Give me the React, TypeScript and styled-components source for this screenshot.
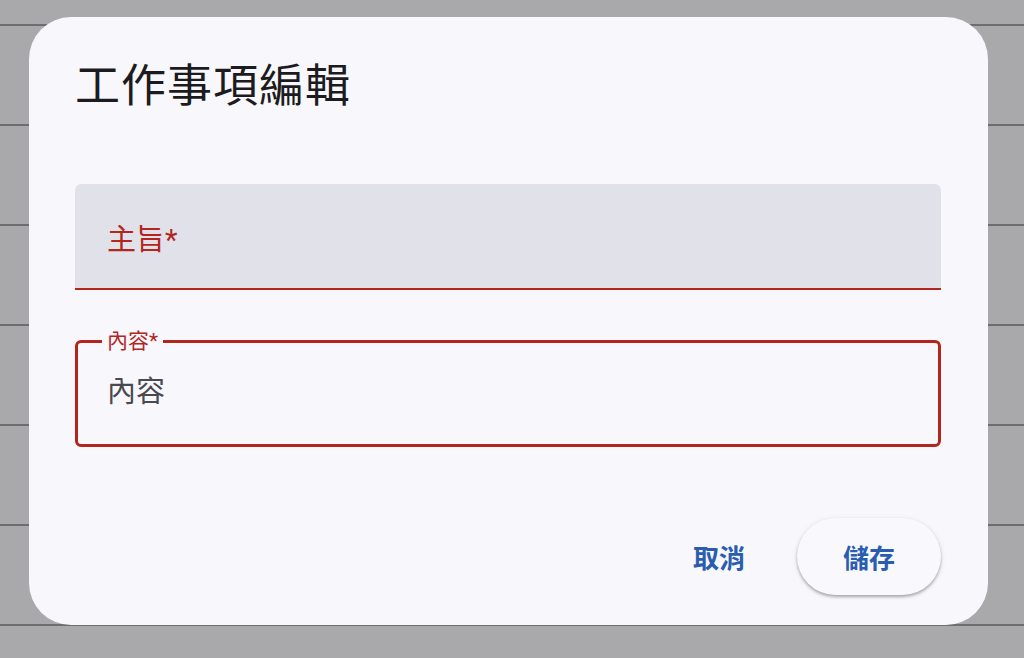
import React from 'react';
import styled, { createGlobalStyle } from 'styled-components';

const GlobalStyle = createGlobalStyle`
  html, body {
    margin: 0;
    padding: 0;
    height: 100%;
  }
  body {
    background-color: #a9a9ab;
    background-image: repeating-linear-gradient(
      to bottom,
      transparent 0,
      transparent 24px,
      #6e6e70 24px,
      #6e6e70 26px,
      transparent 26px,
      transparent 100px
    );
    font-family: Roboto, "Noto Sans CJK TC", "Noto Sans", sans-serif;
    overflow: hidden;
  }
`;

const Page = styled.div`
  width: 1024px;
  height: 658px;
  padding: 17px 0 0 29px;
  box-sizing: border-box;
`;

const Dialog = styled.div`
  width: 959px;
  height: 608px;
  box-sizing: border-box;
  background: #f7f7fc;
  border-radius: 42px;
  padding: 42px 47px 30px 46px;
  display: flex;
  flex-direction: column;
`;

const Title = styled.h1`
  margin: 0;
  font-size: 45px;
  line-height: 56px;
  font-weight: 400;
  color: #1c1b20;
  letter-spacing: 1px;
`;

const Form = styled.div`
  margin-top: 69px;
  display: flex;
  flex-direction: column;
  gap: 51px;
`;

const FilledField = styled.div`
  height: 106px;
  box-sizing: border-box;
  background: #e1e1ea;
  border-radius: 6px 6px 0 0;
  border-bottom: 2px solid #b3261e;
  display: flex;
  align-items: center;
  padding: 1px 32px 0;
`;

const FilledLabel = styled.span`
  font-size: 29px;
  color: #b3261e;
`;

const OutlinedField = styled.fieldset`
  margin: -10px 0 0;
  min-width: 0;
  height: 116px;
  box-sizing: border-box;
  border: 3px solid #b3261e;
  border-radius: 6px;
  padding: 21px 29px 0;
`;

const Legend = styled.legend`
  font-size: 21px;
  line-height: 20px;
  color: #b3261e;
  padding: 0 5px;
  margin-left: -5px;
`;

const Value = styled.div`
  font-size: 29px;
  line-height: 40px;
  color: #4a494e;
`;

const Actions = styled.div`
  margin-top: auto;
  display: flex;
  justify-content: flex-end;
  align-items: center;
  gap: 26px;
`;

const TextButton = styled.button<{ $raised?: boolean }>`
  font-family: inherit;
  font-size: 26px;
  font-weight: 700;
  color: #2a5db0;
  background: ${(p) => (p.$raised ? '#f9f9fd' : 'transparent')};
  border: none;
  border-radius: 40px;
  height: 77px;
  padding: 0 ${(p) => (p.$raised ? '46px' : '26px')};
  box-shadow: ${(p) =>
    p.$raised ? '0 2px 3px rgba(0,0,0,0.28), 0 1px 6px rgba(0,0,0,0.08)' : 'none'};
  cursor: pointer;
`;

const App: React.FC = () => {
  return (
    <>
      <GlobalStyle />
      <Page>
        <Dialog>
          <Title>工作事項編輯</Title>
          <Form>
            <FilledField>
              <FilledLabel>主旨*</FilledLabel>
            </FilledField>
            <OutlinedField>
              <Legend>內容*</Legend>
              <Value>內容</Value>
            </OutlinedField>
          </Form>
          <Actions>
            <TextButton>取消</TextButton>
            <TextButton $raised>儲存</TextButton>
          </Actions>
        </Dialog>
      </Page>
    </>
  );
};

export default App;
